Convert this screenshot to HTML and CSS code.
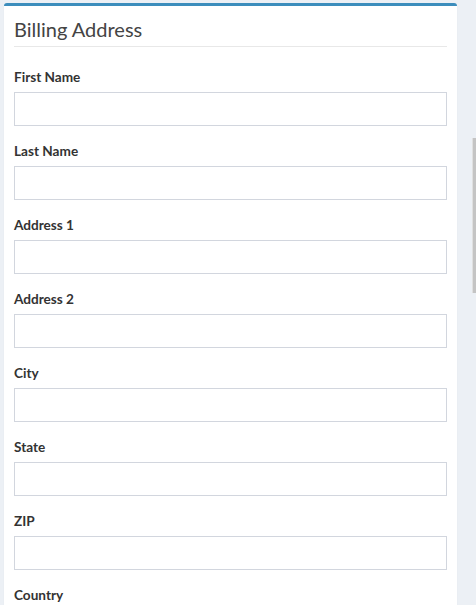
FILE: index.html
```html
<!DOCTYPE html>
<html>
<head>
<meta charset="utf-8">
<link rel="stylesheet" href="styles.css">
</head>
<body>
<div class="page">
  <div class="box">
    <div class="box-header">
      <h3 class="box-title">Billing Address</h3>
    </div>
    <div class="box-body">
      <div class="form-group"><label>First Name</label><input type="text"></div>
      <div class="form-group"><label>Last Name</label><input type="text"></div>
      <div class="form-group"><label>Address 1</label><input type="text"></div>
      <div class="form-group"><label>Address 2</label><input type="text"></div>
      <div class="form-group"><label>City</label><input type="text"></div>
      <div class="form-group"><label>State</label><input type="text"></div>
      <div class="form-group"><label>ZIP</label><input type="text"></div>
      <div class="form-group"><label>Country</label><input type="text"></div>
    </div>
  </div>
</div>
<div class="scroll-thumb"></div>
</body>
</html>
```
FILE: styles.css
```css
html, body {
  margin: 0;
  padding: 0;
  background: #ecf0f5;
  height: 605px;
  overflow: hidden;
}
body {
  font-family: Lato, "Liberation Sans", sans-serif;
  color: #333;
}
.page {
  padding: 3px 19px 0 4px;
}
.box {
  background: #fff;
  border-top: 3px solid #3c8dbc;
  border-radius: 3px;
  box-shadow: 0 1px 1px rgba(0,0,0,0.1);
}
.box-header {
  margin: 0 10px;
  padding: 13px 0 7px;
  border-bottom: 1px solid #e8e8e8;
}
.box-title {
  margin: 0;
  font-size: 20px;
  font-weight: 400;
  line-height: 20px;
  color: #444;
}
.box-body {
  padding: 20px 10px 10px;
}
.form-group {
  display: flex;
  flex-direction: column;
  margin-bottom: 15px;
}
.form-group label {
  font-size: 13.6px;
  font-weight: 700;
  line-height: 20px;
  margin-bottom: 5px;
  color: #333;
}
.form-group input {
  box-sizing: border-box;
  height: 34px;
  width: 100%;
  margin: 0;
  border: 1px solid #d2d6de;
  border-radius: 0;
  background: #fff;
  padding: 6px 12px;
}
.scroll-thumb {
  position: absolute;
  left: 472px;
  top: 138px;
  width: 4px;
  height: 155px;
  background: #c4c4c4;
  border-left: 1px solid #e0e0e0;
}
```
